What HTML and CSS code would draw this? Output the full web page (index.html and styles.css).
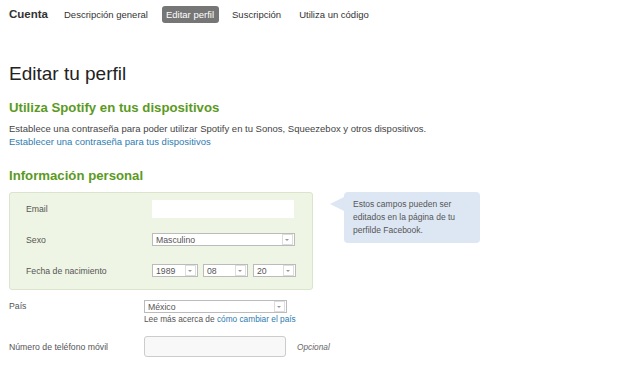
FILE: index.html
```html
<!DOCTYPE html>
<html>
<head>
    <title>Editar tu perfil</title>
    <link rel="stylesheet" href="styles.css">
</head>
<body>
    <nav class="nav">
        <span class="nav-title">Cuenta</span>
        <a class="nav-item">Descripción general</a>
        <a class="nav-item active">Editar perfil</a>
        <a class="nav-item">Suscripción</a>
        <a class="nav-item">Utiliza un código</a>
    </nav>

    <div class="page">
        <h1>Editar tu perfil</h1>

        <h2>Utiliza Spotify en tus dispositivos</h2>
        <p class="text">Establece una contraseña para poder utilizar Spotify en tu Sonos, Squeezebox y otros dispositivos.<br>
            <a class="link">Establecer una contraseña para tus dispositivos</a></p>

        <h2 class="second">Información personal</h2>
        <div class="personal">
            <div class="fb-box">
                <div class="row">
                    <label>Email</label>
                    <div class="input plain"></div>
                </div>
                <div class="row">
                    <label>Sexo</label>
                    <div class="select wide"><span>Masculino</span><i class="arrow"></i></div>
                </div>
                <div class="row">
                    <label>Fecha de nacimiento</label>
                    <div class="dates">
                        <div class="select year"><span>1989</span><i class="arrow"></i></div>
                        <div class="select month"><span>08</span><i class="arrow"></i></div>
                        <div class="select day"><span>20</span><i class="arrow"></i></div>
                    </div>
                </div>
            </div>
            <div class="tip">Estos campos pueden ser editados en la página de tu perfilde Facebook.</div>
        </div>

        <div class="row outer country">
            <label>País</label>
            <div>
                <div class="select wide"><span>México</span><i class="arrow"></i></div>
                <div class="hint">Lee más acerca de <a class="link">cómo cambiar el país</a></div>
            </div>
        </div>
        <div class="row outer phone-row">
            <label>Número de teléfono móvil</label>
            <div class="input phone"></div>
            <span class="optional">Opcional</span>
        </div>
    </div>
</body>
</html>
```

FILE: styles.css
```css
body {
    margin: 0;
    font-family: "Liberation Sans", Arial, sans-serif;
    color: #333;
    background: #fff;
}
.nav {
    display: flex;
    align-items: center;
    height: 28px;
    padding-left: 9px;
    font-size: 9.5px;
    color: #333;
}
.nav-title {
    font-size: 11.5px;
    font-weight: bold;
    color: #333;
    margin-right: 12px;
}
.nav-item {
    padding: 3px 5px 3px 4px;
    margin-right: 9px;
    border-radius: 3px;
}
.nav-item.active {
    background: #767676;
    color: #fff;
}
.page {
    padding: 0 9px;
}
h1 {
    margin: 34px 0 0;
    font-size: 19px;
    font-weight: normal;
    color: #222;
    line-height: 24px;
}
h2 {
    margin: 13px 0 0;
    font-size: 13.2px;
    line-height: 18px;
    color: #5b9a1f;
}
h2.second {
    margin-top: 19px;
}
.text {
    margin: 5px 0 0;
    font-size: 9.5px;
    line-height: 13px;
    color: #444;
}
.link {
    color: #2e7bb0;
}
.personal {
    display: flex;
    align-items: flex-start;
    margin-top: 7px;
}
.fb-box {
    width: 270px;
    padding: 0 16px 3px;
    background: #eff5e4;
    border: 1px solid #dbe4cc;
    border-radius: 3px;
}
.row {
    display: flex;
    align-items: center;
    height: 31px;
    font-size: 8.7px;
    color: #555;
}
.row label {
    width: 126px;
    flex: none;
}
.input.plain {
    width: 142px;
    height: 18px;
    background: #fff;
}
.select {
    display: flex;
    align-items: center;
    height: 11px;
    border: 1px solid #bbb;
    background: #fff;
    font-size: 8.7px;
    color: #555;
}
.select span {
    flex: 1;
    padding-left: 3px;
}
.arrow {
    position: relative;
    width: 9px;
    height: 9px;
    margin-right: 1px;
    border: 1px solid #ddd;
}
.arrow::after {
    content: "";
    position: absolute;
    left: 2px;
    top: 4px;
    border: 2px solid transparent;
    border-top: 2px solid #999;
}
.select.wide {
    width: 141px;
}
.dates {
    display: flex;
    gap: 5px;
}
.select.year {
    width: 44px;
}
.select.month {
    width: 43px;
}
.select.day {
    width: 41px;
}
.tip {
    position: relative;
    width: 118px;
    margin-left: 31px;
    padding: 6px 9px 6px;
    background: #dde7f4;
    border-radius: 4px;
    font-size: 8.5px;
    line-height: 13px;
    color: #555;
}
.tip::before {
    content: "";
    position: absolute;
    left: -14px;
    top: 5px;
    border: 7px solid transparent;
    border-right: 14px solid #dde7f4;
    border-left: 0;
}
.row.outer label {
    width: 135px;
}
.country {
    align-items: flex-start;
    height: auto;
    margin-top: 10px;
}
.country label {
    margin-top: 1px;
}
.hint {
    margin-top: 1px;
    font-size: 8.3px;
    color: #555;
}
.input.phone {
    width: 140px;
    height: 19px;
    background: #f8f8f8;
    border: 1px solid #ccc;
    border-radius: 3px;
}
.optional {
    margin-left: 11px;
    font-style: italic;
    font-size: 8.3px;
    color: #666;
}
.phone-row {
    margin-top: 7px;
}
```
